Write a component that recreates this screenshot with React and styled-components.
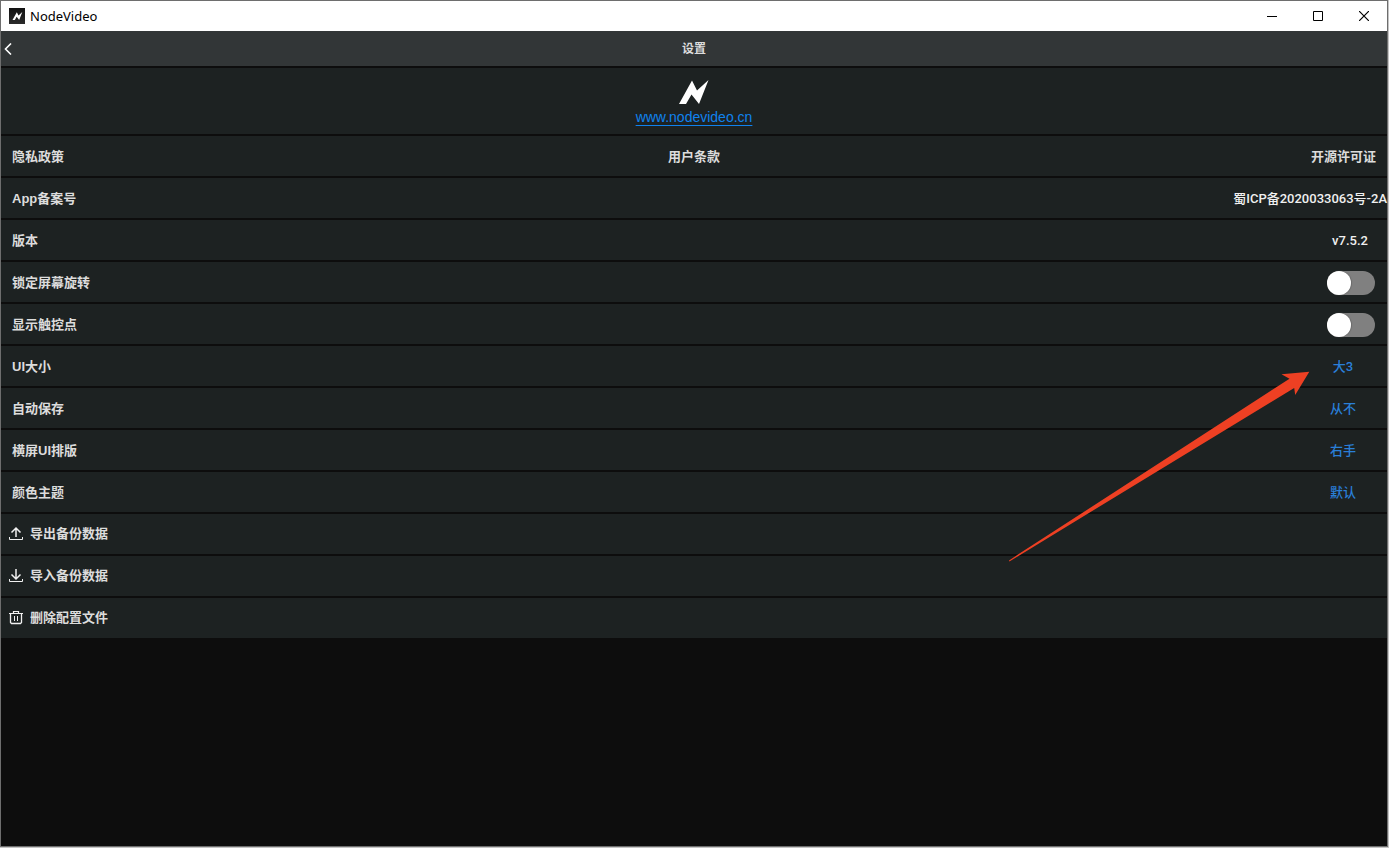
import React from 'react';
import styled, { createGlobalStyle } from 'styled-components';

const GlobalStyle = createGlobalStyle`
    * {
        box-sizing: border-box;
    }
    body {
        margin: 0;
        background-color: #c4c4c4;
        font-family: 'Liberation Sans', 'Noto Sans CJK SC', sans-serif;
        font-size: 13px;
        line-height: 20px;
    }
    button {
        padding: 0;
        border: none;
        background: none;
        color: inherit;
        font: inherit;
        cursor: pointer;
    }
    svg {
        display: block;
        flex: none;
    }
`;

const Desktop = styled.div`
    min-height: 100vh;
    display: flex;
    padding: 0 1px 1px 0;
`;

const AppWindow = styled.div`
    position: relative;
    flex: 1;
    display: flex;
    flex-direction: column;
    border: 1px solid #6e6e6e;
    background-color: #0d0d0d;
    color: #dcdcdc;
`;

const TitleBar = styled.div`
    height: 30px;
    display: flex;
    align-items: center;
    gap: 5px;
    padding-left: 8px;
    background-color: #ffffff;
    color: #000000;
    font-family: 'Noto Sans', sans-serif;
`;

const AppBadge = styled.span`
    display: flex;
    align-items: center;
    justify-content: center;
    width: 16px;
    height: 16px;
    background: linear-gradient(#111111, #2b2b2b);
`;

const WindowControls = styled.div`
    display: flex;
    margin-left: auto;
`;

const WindowButton = styled.button`
    width: 46px;
    height: 28px;
    display: flex;
    align-items: center;
    justify-content: center;
`;

const Header = styled.header`
    height: 35px;
    display: grid;
    grid-template-columns: 1fr auto 1fr;
    align-items: center;
    background-color: #323637;
`;

const BackButton = styled.button`
    justify-self: start;
    padding: 8px 3px;
`;

const Title = styled.h1`
    margin: 0;
    font-size: 12px;
    font-weight: 700;
`;

const Settings = styled.main`
    display: flex;
    flex-direction: column;
    gap: 2px;
    padding-top: 2px;
`;

const Brand = styled.section`
    height: 66px;
    display: flex;
    flex-direction: column;
    align-items: center;
    gap: 3px;
    padding-top: 12px;
    background-color: #1d2222;
`;

const SiteLink = styled.a`
    color: #1082ee;
    font-size: 14px;
    text-decoration: underline 1px #1082ee;
    text-underline-offset: 3px;
`;

const Row = styled.div`
    height: 40px;
    display: flex;
    align-items: center;
    justify-content: space-between;
    padding: 1px 0 0 11px;
    background-color: #1d2222;
    font-weight: 700;
`;

const LinkRow = styled(Row)`
    display: grid;
    grid-template-columns: 1fr auto 1fr;
    padding-right: 11px;

    & > :last-child {
        justify-self: end;
    }
`;

const PolicyLink = styled.a`
    justify-self: start;
    color: inherit;
    text-decoration: none;
`;

const Value = styled.span`
    min-width: ${(p) => p.$width || 'auto'};
    color: #f0f0f0;
    font-family: Roboto, 'Noto Sans CJK SC', sans-serif;
    font-weight: 500;
    text-align: center;
`;

const OptionButton = styled.button`
    width: 88px;
    height: 38px;
    color: #2a7fd8;
    font-family: Roboto, 'Noto Sans CJK SC', sans-serif;
    font-weight: 500;
`;

const Switch = styled.input`
    appearance: none;
    width: 48px;
    height: 24px;
    margin: 0 12px 0 0;
    border-radius: 12px;
    background-color: #808080;
    cursor: pointer;

    &::before {
        content: '';
        display: block;
        width: 24px;
        height: 24px;
        border-radius: 50%;
        background-color: #ffffff;
        box-shadow: 1px 0 1px #6a6a6a;
    }
    &:checked {
        background-color: #2a7fd8;
    }
    &:checked::before {
        margin-left: 24px;
    }
`;

const ActionButton = styled.button`
    height: 40px;
    display: flex;
    align-items: center;
    gap: 6px;
    padding-left: 7px;
    background-color: #1d2222;
    font-weight: 700;
`;

const Pointer = styled.svg`
    position: absolute;
    top: 369px;
    right: 77px;
    pointer-events: none;
`;

const Logo = ({ width, height }) => (
    <svg width={width} height={height} viewBox="0 0 30 24" fill="#ffffff" aria-hidden="true">
        <path d="M0 24 L13 0.5 L18 10.5 L29.5 0 L20 24 L12.5 14.5 L7 24 Z" />
    </svg>
);

const TransferIcon = ({ up }) => (
    <svg width="16" height="16" viewBox="0 0 16 16" fill="none" stroke="#f0f0f0" aria-hidden="true">
        <path d="M1.5 11 V13.5 H14.5 V11" />
        <path d={up ? 'M8 11 V2.5 M3.5 6.5 L8 2 L12.5 6.5' : 'M8 1 V10.5 M3.5 6.5 L8 11 L12.5 6.5'} strokeWidth="1.5" />
    </svg>
);

const TrashIcon = () => (
    <svg width="16" height="16" viewBox="0 0 16 16" fill="none" stroke="#f0f0f0" aria-hidden="true">
        <path d="M1 3.5 H15 M5.5 3.5 V1.5 H10.5 V3.5" strokeWidth="1.2" />
        <path d="M2.5 3.5 V12.5 L3.5 13.5 H12.5 L13.5 12.5 V3.5" strokeWidth="1.3" />
        <path d="M6.5 6 V11 M9.5 6 V11" />
    </svg>
);

const switches = [
    { id: 'lock-rotation', label: '锁定屏幕旋转' },
    { id: 'show-touches', label: '显示触控点' },
];

const options = [
    { id: 'ui-size', label: 'UI大小', value: '大3' },
    { id: 'auto-save', label: '自动保存', value: '从不' },
    { id: 'landscape', label: '横屏UI排版', value: '右手' },
    { id: 'theme', label: '颜色主题', value: '默认' },
];

const App = () => (
    <>
        <GlobalStyle />
        <Desktop>
            <AppWindow>
                <TitleBar>
                    <AppBadge>
                        <Logo width={11} height={8} />
                    </AppBadge>
                    <span>NodeVideo</span>
                    <WindowControls>
                        <WindowButton aria-label="Minimize">
                            <svg width="10" height="10" stroke="#000000">
                                <path d="M0 5.5 H10" />
                            </svg>
                        </WindowButton>
                        <WindowButton aria-label="Maximize">
                            <svg width="10" height="10" fill="none" stroke="#000000">
                                <path d="M0.5 0.5 H9.5 V9.5 H0.5 Z" />
                            </svg>
                        </WindowButton>
                        <WindowButton aria-label="Close">
                            <svg width="10" height="10" stroke="#000000" strokeWidth="1.2">
                                <path d="M0 0 L10 10 M10 0 L0 10" />
                            </svg>
                        </WindowButton>
                    </WindowControls>
                </TitleBar>
                <Header>
                    <BackButton aria-label="返回">
                        <svg width="8" height="12" fill="none" stroke="#ffffff" strokeWidth="1.6">
                            <path d="M7 0.5 L1.5 6 L7 11.5" />
                        </svg>
                    </BackButton>
                    <Title>设置</Title>
                </Header>
                <Settings>
                    <Brand>
                        <Logo width={30} height={24} />
                        <SiteLink href="#site">www.nodevideo.cn</SiteLink>
                    </Brand>
                    <LinkRow>
                        <PolicyLink href="#privacy">隐私政策</PolicyLink>
                        <PolicyLink href="#terms">用户条款</PolicyLink>
                        <PolicyLink href="#licenses">开源许可证</PolicyLink>
                    </LinkRow>
                    <Row>
                        <span>App备案号</span>
                        <Value>蜀ICP备2020033063号-2A</Value>
                    </Row>
                    <Row>
                        <span>版本</span>
                        <Value $width="74px">v7.5.2</Value>
                    </Row>
                    {switches.map(({ id, label }) => (
                        <Row key={id}>
                            <label htmlFor={id}>{label}</label>
                            <Switch id={id} type="checkbox" />
                        </Row>
                    ))}
                    {options.map(({ id, label, value }) => (
                        <Row key={id}>
                            <span id={id}>{label}</span>
                            <OptionButton aria-describedby={id}>{value}</OptionButton>
                        </Row>
                    ))}
                    <ActionButton>
                        <TransferIcon up />
                        导出备份数据
                    </ActionButton>
                    <ActionButton>
                        <TransferIcon />
                        导入备份数据
                    </ActionButton>
                    <ActionButton>
                        <TrashIcon />
                        删除配置文件
                    </ActionButton>
                </Settings>
                <Pointer width="302" height="192" viewBox="1008 370 302 192" fill="#ee4023" aria-hidden="true">
                    <path d="M1009 560.4 L1289.5 378.7 L1281.5 374.3 L1309.3 371.7 L1295.2 395 L1294.2 388 L1009.4 561.4 Z" />
                </Pointer>
            </AppWindow>
        </Desktop>
    </>
);

export default App;
